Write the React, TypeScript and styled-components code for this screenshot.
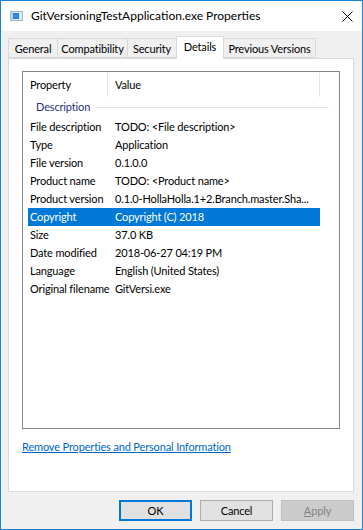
import React from 'react';
import styled, { createGlobalStyle } from 'styled-components';

const FONT = `Lato, 'Noto Sans', sans-serif`;

const Global = createGlobalStyle`
  html, body { margin: 0; padding: 0; background: #ffffff; }
  body { font-family: ${FONT}; font-size: 11px; letter-spacing: -0.15px; color: #000; }
  * { box-sizing: border-box; }
`;

const Window = styled.div`
  width: 363px;
  height: 530px;
  display: flex;
  flex-direction: column;
  border: 1px solid #1883d7;
  background: #f0f0f0;
`;

const TitleBar = styled.div`
  height: 30px;
  flex: none;
  background: #ffffff;
  display: flex;
  align-items: center;
  padding-left: 9px;
  padding-right: 9px;
`;

const TitleText = styled.span`
  margin-left: 8px;
  font-size: 12px;
  letter-spacing: 0;
  color: #000;
  white-space: nowrap;
  padding-bottom: 1px;
`;

const CloseButton = styled.div`
  margin-left: auto;
  width: 11px;
  height: 11px;
  display: flex;
`;

const Body = styled.div`
  flex: 1;
  display: flex;
  flex-direction: column;
  padding: 5px 8px 8px 7px;
`;

const TabStrip = styled.div`
  height: 22px;
  flex: none;
  display: flex;
  align-items: flex-end;
  position: relative;
  z-index: 1;
`;

const Tab = styled.div<{ $w: number; $active?: boolean }>`
  width: ${(p) => p.$w}px;
  height: ${(p) => (p.$active ? 23 : 20)}px;
  margin-bottom: ${(p) => (p.$active ? -1 : 0)}px;
  margin-right: -1px;
  border: 1px solid #d9d9d9;
  border-bottom: ${(p) => (p.$active ? 'none' : '1px solid #d9d9d9')};
  background: ${(p) => (p.$active ? '#ffffff' : '#f0f0f0')};
  display: flex;
  justify-content: center;
  align-items: ${(p) => (p.$active ? 'flex-start' : 'center')};
  padding-top: ${(p) => (p.$active ? 3 : 0)}px;
  white-space: nowrap;
`;

const Panel = styled.div`
  height: 434px;
  flex: none;
  border: 1px solid #d9d9d9;
  background: #ffffff;
  padding: 12px 13px 0 13px;
  display: flex;
  flex-direction: column;
`;

const ListBox = styled.div`
  height: 358px;
  flex: none;
  border: 1px solid #828790;
  display: flex;
  flex-direction: column;
  overflow: hidden;
`;

const Header = styled.div`
  height: 25px;
  flex: none;
  display: flex;
  padding-top: 1px;
`;

const HeaderCell = styled.div<{ $w: number }>`
  width: ${(p) => p.$w}px;
  border-right: 1px solid #e5e5e5;
  display: flex;
  align-items: center;
  padding-left: 7px;
  padding-bottom: 1px;
`;

const HeaderFiller = styled.div`
  flex: 1;
`;

const Group = styled.div`
  height: 21px;
  flex: none;
  display: flex;
  align-items: center;
  padding-left: 13px;
  padding-right: 10px;
  padding-bottom: 2px;
`;

const GroupTitle = styled.span`
  color: #1e3287;
  white-space: nowrap;
`;

const GroupLine = styled.div`
  flex: 1;
  height: 1px;
  margin-left: 5px;
  margin-top: 1px;
  background: #e2e6ef;
`;

const Row = styled.div<{ $selected?: boolean }>`
  height: 18px;
  width: 292px;
  flex: none;
  margin-left: 5px;
  padding-bottom: 1px;
  display: flex;
  align-items: center;
  background: ${(p) => (p.$selected ? '#0078d7' : 'transparent')};
  color: ${(p) => (p.$selected ? '#ffffff' : '#000000')};
`;

const PropCell = styled.div`
  width: 87px;
  flex: none;
  padding-left: 2px;
  white-space: nowrap;
`;

const ValueCell = styled.div`
  flex: 1;
  white-space: nowrap;
  overflow: hidden;
`;

const Link = styled.a`
  margin-top: 10px;
  color: #0066cc;
  text-decoration: underline;
  line-height: 15px;
  cursor: pointer;
  align-self: flex-start;
`;

const ButtonRow = styled.div`
  margin-top: 8px;
  display: flex;
  justify-content: flex-end;
  gap: 8px;
`;

const Button = styled.div<{ $kind?: 'default' | 'normal' | 'disabled' }>`
  width: 73px;
  height: 21px;
  display: flex;
  align-items: center;
  justify-content: center;
  background: ${(p) => (p.$kind === 'disabled' ? '#cccccc' : '#e1e1e1')};
  color: ${(p) => (p.$kind === 'disabled' ? '#838383' : '#000000')};
  border: ${(p) =>
    p.$kind === 'default'
      ? '2px solid #0078d7'
      : p.$kind === 'disabled'
      ? '1px solid #bfbfbf'
      : '1px solid #adadad'};
`;

const Mnemonic = styled.span`
  text-decoration: underline;
`;

const rows: [string, string][] = [
  ['File description', 'TODO: <File description>'],
  ['Type', 'Application'],
  ['File version', '0.1.0.0'],
  ['Product name', 'TODO: <Product name>'],
  ['Product version', '0.1.0-HollaHolla.1+2.Branch.master.Sha...'],
  ['Copyright', 'Copyright (C) 2018'],
  ['Size', '37.0 KB'],
  ['Date modified', '2018-06-27 04:19 PM'],
  ['Language', 'English (United States)'],
  ['Original filename', 'GitVersi.exe'],
];

const tabs: { label: string; w: number; active?: boolean }[] = [
  { label: 'General', w: 50 },
  { label: 'Compatibility', w: 71 },
  { label: 'Security', w: 50 },
  { label: 'Details', w: 48, active: true },
  { label: 'Previous Versions', w: 93 },
];

const AppIcon = () => (
  <svg width="13" height="10" viewBox="0 0 13 10">
    <rect x="0.5" y="0.5" width="12" height="9" fill="#e8eef6" stroke="#9fb6d3" />
    <rect x="1" y="1" width="2" height="8" fill="#c9d3df" />
    <rect x="3" y="2" width="6" height="6" fill="#1e78d7" />
    <rect x="4" y="3" width="4" height="4" fill="#2f8ff0" />
  </svg>
);

const CloseIcon = () => (
  <svg width="11" height="11" viewBox="0 0 11 11">
    <path d="M0.5 0.5 L10.5 10.5 M10.5 0.5 L0.5 10.5" stroke="#000" strokeWidth="1" fill="none" />
  </svg>
);

export default function App() {
  return (
    <>
      <Global />
      <Window>
        <TitleBar>
          <AppIcon />
          <TitleText>GitVersioningTestApplication.exe Properties</TitleText>
          <CloseButton>
            <CloseIcon />
          </CloseButton>
        </TitleBar>
        <Body>
          <TabStrip>
            {tabs.map((t) => (
              <Tab key={t.label} $w={t.w} $active={t.active}>
                {t.label}
              </Tab>
            ))}
          </TabStrip>
          <Panel>
            <ListBox>
              <Header>
                <HeaderCell $w={85}>Property</HeaderCell>
                <HeaderCell $w={212}>Value</HeaderCell>
                <HeaderFiller />
              </Header>
              <Group>
                <GroupTitle>Description</GroupTitle>
                <GroupLine />
              </Group>
              {rows.map(([k, v]) => (
                <Row key={k} $selected={k === 'Copyright'}>
                  <PropCell>{k}</PropCell>
                  <ValueCell>{v}</ValueCell>
                </Row>
              ))}
            </ListBox>
            <Link>Remove Properties and Personal Information</Link>
          </Panel>
          <ButtonRow>
            <Button $kind="default">OK</Button>
            <Button $kind="normal">Cancel</Button>
            <Button $kind="disabled">
              <Mnemonic>A</Mnemonic>pply
            </Button>
          </ButtonRow>
        </Body>
      </Window>
    </>
  );
}
